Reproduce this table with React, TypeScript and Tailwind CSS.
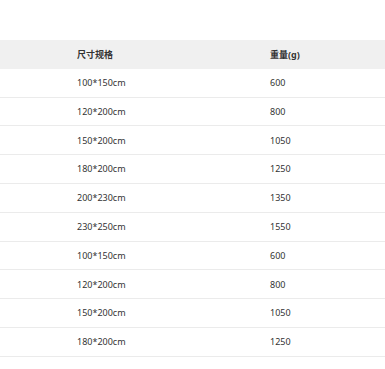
const rows = [
  ["100*150cm", "600"],
  ["120*200cm", "800"],
  ["150*200cm", "1050"],
  ["180*200cm", "1250"],
  ["200*230cm", "1350"],
  ["230*250cm", "1550"],
  ["100*150cm", "600"],
  ["120*200cm", "800"],
  ["150*200cm", "1050"],
  ["180*200cm", "1250"],
];

export default function App() {
  return (
    <div
      className="w-[385px] h-[369px] bg-white pt-[40px] text-[9px] text-[#333]"
      style={{ fontFamily: '"Noto Sans", "Noto Sans CJK SC", sans-serif' }}
    >
      <div className="grid grid-cols-[77px_193px_1fr] h-[28.8px] items-center bg-[#f0f0f0] font-bold">
        <div />
        <div>尺寸规格</div>
        <div>重量(g)</div>
      </div>
      {rows.map(([size, weight], i) => (
        <div
          key={i}
          className="grid grid-cols-[77px_193px_1fr] h-[28.8px] items-center border-b border-[#ebebeb]"
        >
          <div />
          <div>{size}</div>
          <div>{weight}</div>
        </div>
      ))}
    </div>
  );
}
